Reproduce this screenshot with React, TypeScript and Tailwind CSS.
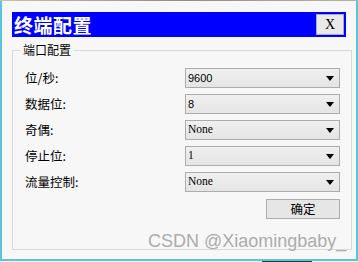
const rows: { label: string; value: string; serif?: boolean }[] = [
  { label: "位/秒:", value: "9600" },
  { label: "数据位:", value: "8" },
  { label: "奇偶:", value: "None", serif: true },
  { label: "停止位:", value: "1", serif: true },
  { label: "流量控制:", value: "None", serif: true },
];

function Select({ value, serif }: { value: string; serif?: boolean }) {
  return (
    <div className="flex h-[20px] w-[155px] items-center justify-between border border-[#acacac] bg-gradient-to-b from-[#f0f0f0] to-[#e4e4e4] pl-[2px] pr-[5px]">
      <span
        className={
          serif
            ? "font-['Liberation_Serif',serif] text-[11.5px] text-black"
            : "font-['Liberation_Sans',sans-serif] text-[11px] text-black"
        }
      >
        {value}
      </span>
      <svg width="8" height="5" viewBox="0 0 8 5">
        <path d="M0 0H8L4 5Z" fill="#000" />
      </svg>
    </div>
  );
}

export default function App() {
  return (
    <div className="relative flex h-[262px] w-[358px] flex-col overflow-hidden bg-white font-['Noto_Sans_CJK_SC',sans-serif]">
      <div className="h-[1px] w-full bg-gradient-to-r from-[#c9c2a8] via-[#8c8c8c] to-[#b9b4a0]" />

      <div className="flex h-[260px] flex-col border-x-2 border-b-2 border-[#5bc3dc] bg-[#f7f7f7] px-[10px] pt-[11px]">
        <div className="flex h-[25px] w-[334px] items-center justify-between bg-[#0000ff] pl-[2px] pr-[2px]">
          <span className="text-[19px] font-bold leading-none tracking-[0.5px] text-white">终端配置</span>
          <button
            type="button"
            className="flex h-[21px] w-[28px] items-center justify-center border border-[#adadad] bg-[#e9e9e9] font-['Liberation_Serif',serif] text-[14px] text-black"
          >
            X
          </button>
        </div>

        <fieldset className="mt-[6px] h-[207px] w-[340px] border border-[#d9d9d9] pl-[12px] pt-[11px]">
          <legend className="ml-[-5px] px-[3px] text-[12px] leading-[14px] text-black">端口配置</legend>

          <div className="flex flex-col gap-[6px]">
            {rows.map((row) => (
              <div key={row.label} className="flex h-[20px] items-center">
                <span className="w-[160px] text-[12.5px] leading-none text-black">{row.label}</span>
                <Select value={row.value} serif={row.serif} />
              </div>
            ))}
          </div>

          <button
            type="button"
            className="mt-[7px] ml-[241px] flex h-[20px] w-[74px] items-center justify-center border border-[#adadad] bg-[#e6e6e6] text-[12.5px] text-black"
          >
            确定
          </button>
        </fieldset>
      </div>

      <div className="flex h-[1px] w-full">
        <div className="w-[262px]" />
        <div className="w-[50px] bg-[#333]" />
      </div>

      <span className="absolute left-[148px] top-[232px] font-['Liberation_Sans',sans-serif] text-[18px] leading-none text-[#acacac]">
        CSDN @Xiaomingbaby_
      </span>
    </div>
  );
}
